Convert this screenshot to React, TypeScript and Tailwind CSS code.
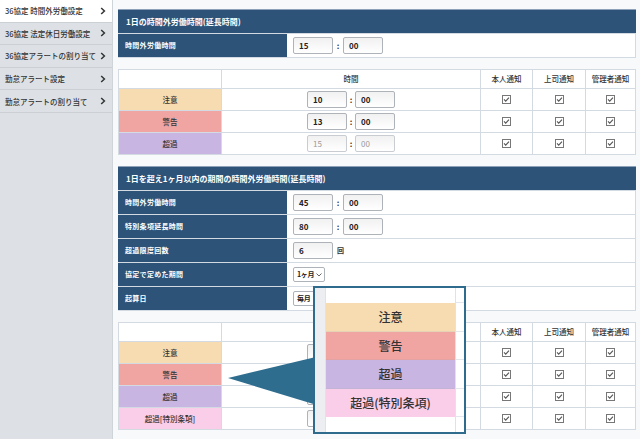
import React from "react";

const navItems = [
    { label: "36協定 時間外労働設定", active: true },
    { label: "36協定 法定休日労働設定", active: false },
    { label: "36協定アラートの割り当て", active: false },
    { label: "勤怠アラート設定", active: false },
    { label: "勤怠アラートの割り当て", active: false },
];

const levels = [
    { label: "注意", bg: "bg-[#f7dcb1]", h: "10", m: "00", disabled: false },
    { label: "警告", bg: "bg-[#f0a5a3]", h: "13", m: "00", disabled: false },
    { label: "超過", bg: "bg-[#c9b5e2]", h: "15", m: "00", disabled: true },
];

// time values of the second table sit under the callout, so they stay empty
const levels2 = [
    { label: "注意", bg: "bg-[#f7dcb1]", h: "", m: "", disabled: false },
    { label: "警告", bg: "bg-[#f0a5a3]", h: "", m: "", disabled: false },
    { label: "超過", bg: "bg-[#c9b5e2]", h: "", m: "", disabled: false },
    { label: "超過[特別条項]", bg: "bg-[#facde9]", h: "", m: "", disabled: false },
];

function Chevron() {
    return (
        <svg width="6" height="8" viewBox="0 0 6 8" className="shrink-0">
            <path d="M1.2 1 L4.4 4 L1.2 7" stroke="#333" strokeWidth="1.5" fill="none" />
        </svg>
    );
}

function Check() {
    return (
        <svg width="9" height="9" viewBox="0 0 9 9" className="mx-auto block">
            <rect x="0.5" y="0.5" width="8" height="8" fill="#fff" stroke="#777" />
            <path d="M2 4.4 L3.7 6.1 L7 2.6" stroke="#555" strokeWidth="1.1" fill="none" />
        </svg>
    );
}

function Field({ value, disabled }: { value: string; disabled?: boolean }) {
    return (
        <div
            className={
                "w-[40px] h-[17px] rounded-[2px] border bg-gradient-to-b from-[#f1f1f1] to-white flex items-center pl-[5px] text-[8px] " +
                (disabled ? "border-[#c9cdd2] text-[#999] font-normal" : "border-[#aeb3b9] text-[#222] font-bold")
            }
        >
            {value}
        </div>
    );
}

function TimePair({ h, m, disabled, gap }: { h: string; m: string; disabled?: boolean; gap: string }) {
    return (
        <div className="flex items-center">
            <Field value={h} disabled={disabled} />
            <span className={gap + " text-center text-[8px] font-bold text-[#333]"}>{h ? ":" : ""}</span>
            <Field value={m} disabled={disabled} />
        </div>
    );
}

function PanelRow({ label, children }: { label: string; children: React.ReactNode }) {
    return (
        <div className="grid grid-cols-[169px_1fr] h-[24px] border-t border-[#d3dae2]">
            <div className="bg-[#2d5378] text-white text-[7px] font-bold tracking-[0.3px] flex items-center pl-[7px]">{label}</div>
            <div className="bg-white border-r border-[#d3dae2] flex items-center pl-[6px]">{children}</div>
        </div>
    );
}

function PanelHeader({ title }: { title: string }) {
    return (
        <div className="h-[24px] bg-[#2d5378] text-white text-[8px] font-bold flex items-center pl-[8px] border-t border-[#8da2b8]">
            {title}
        </div>
    );
}

function Select({ value }: { value: string }) {
    return (
        <div className="w-[32px] h-[15px] rounded-[2px] border border-[#aeb3b9] bg-white flex items-center justify-between pl-[3px] pr-[2px] text-[7px] font-bold text-[#222] whitespace-nowrap">
            <span className="tracking-[-0.3px]">{value}</span>
            <svg width="6" height="4" viewBox="0 0 6 4" className="shrink-0">
                <path d="M0.5 0.5 L3 3 L5.5 0.5" stroke="#555" strokeWidth="0.9" fill="none" />
            </svg>
        </div>
    );
}

function LevelTable({ rows, timeTitle }: { rows: typeof levels; timeTitle: string }) {
    return (
        <table className="w-full table-fixed border-collapse bg-white text-[#333]">
            <colgroup>
                <col className="w-[103px]" />
                <col className="w-[259px]" />
                <col className="w-[52px]" />
                <col className="w-[53px]" />
                <col />
            </colgroup>
            <thead>
                <tr className="h-[19px] text-[7.5px]">
                    <th className="border border-[#d3dae2]"></th>
                    <th className="border border-[#d3dae2] font-medium">{timeTitle}</th>
                    <th className="border border-[#d3dae2] font-medium">本人通知</th>
                    <th className="border border-[#d3dae2] font-medium">上司通知</th>
                    <th className="border border-[#d3dae2] font-medium">管理者通知</th>
                </tr>
            </thead>
            <tbody>
                {rows.map((r) => (
                    <tr key={r.label} className="h-[22px]">
                        <td className={"border border-[#d3dae2] text-center text-[7.5px] font-medium " + r.bg}>{r.label}</td>
                        <td className="border border-[#d3dae2]">
                            <div className="flex justify-center">
                                <TimePair h={r.h} m={r.m} disabled={r.disabled} gap="w-[8px]" />
                            </div>
                        </td>
                        <td className="border border-[#d3dae2]"><Check /></td>
                        <td className="border border-[#d3dae2]"><Check /></td>
                        <td className="border border-[#d3dae2]"><Check /></td>
                    </tr>
                ))}
            </tbody>
        </table>
    );
}

export default function App() {
    return (
        <div className="flex w-[640px] h-[439px] overflow-hidden bg-white font-['Noto_Sans_CJK_JP',sans-serif] text-[#333]">
            <aside className="w-[113px] shrink-0 bg-[#dde1e5] border-r border-[#cfd4d9]">
                {navItems.map((item) => (
                    <div
                        key={item.label}
                        className={
                            "h-[22.6px] flex items-center justify-between pl-[5px] pr-[6px] border-b border-[#cbd0d5] text-[7.5px] font-medium " +
                            (item.active ? "bg-white" : "")
                        }
                    >
                        <span className="whitespace-nowrap">{item.label}</span>
                        <Chevron />
                    </div>
                ))}
            </aside>

            <main className="relative flex-1 pl-[5px] pr-[4px] pt-[9px] bg-[#f8f9fa]">
                <section>
                    <PanelHeader title="1日の時間外労働時間(延長時間)" />
                    <PanelRow label="時間外労働時間">
                        <TimePair h="15" m="00" gap="w-[10px]" />
                    </PanelRow>
                    <div className="border-t border-[#d3dae2]" />
                </section>

                <div className="mt-[11px]">
                    <LevelTable rows={levels} timeTitle="時間" />
                </div>

                <section className="mt-[11px]">
                    <PanelHeader title="1日を超え1ヶ月以内の期間の時間外労働時間(延長時間)" />
                    <PanelRow label="時間外労働時間">
                        <TimePair h="45" m="00" gap="w-[10px]" />
                    </PanelRow>
                    <PanelRow label="特別条項延長時間">
                        <TimePair h="80" m="00" gap="w-[10px]" />
                    </PanelRow>
                    <PanelRow label="超過限度回数">
                        <Field value="6" />
                        <span className="ml-[4px] text-[7px] font-bold">回</span>
                    </PanelRow>
                    <PanelRow label="協定で定めた期間">
                        <Select value="1ヶ月" />
                    </PanelRow>
                    <PanelRow label="起算日">
                        <Select value="毎月" />
                    </PanelRow>
                    <div className="border-t border-[#d3dae2]" />
                </section>

                <div className="mt-[11px]">
                    {/* the time heading here is covered by the callout */}
                    <LevelTable rows={levels2} timeTitle="" />
                </div>

                {/* callout pointer */}
                <svg className="absolute left-[115px] top-[356px]" width="92" height="50" viewBox="0 0 92 50">
                    <polygon points="0,22 92,0 92,50" fill="#2f6d8f" />
                </svg>

                {/* zoomed legend callout */}
                <div className="absolute left-[200px] top-[286px] w-[153px] h-[148px] border-2 border-[#2f6b8c] bg-white flex">
                    <div className="w-[11px] bg-[#eceef1] border-r border-[#dfe3e8]" />
                    <div className="w-[129px] flex flex-col">
                        <div className="h-[15px]" />
                        <div className="h-[29px] bg-[#f7dcb1] flex items-center justify-center text-[12px] font-medium border-b border-[#e6d3b5]">注意</div>
                        <div className="h-[28px] bg-[#f0a5a3] flex items-center justify-center text-[12px] font-medium border-b border-[#e3a3a3]">警告</div>
                        <div className="h-[29px] bg-[#c9b5e2] flex items-center justify-center text-[12px] font-medium border-b border-[#c3b4d6]">超過</div>
                        <div className="h-[28px] bg-[#facde9] flex items-center justify-center text-[12px] font-medium">超過(特別条項)</div>
                    </div>
                    <div className="flex-1 border-l border-[#dfe3e8] flex flex-col">
                        <div className="h-[15px] border-b border-[#e3e7eb]" />
                        <div className="h-[29px] border-b border-[#e3e7eb]" />
                        <div className="h-[28px] border-b border-[#e3e7eb]" />
                        <div className="h-[29px] border-b border-[#e3e7eb]" />
                        <div className="h-[28px] border-b border-[#e3e7eb]" />
                    </div>
                </div>
            </main>
        </div>
    );
}
